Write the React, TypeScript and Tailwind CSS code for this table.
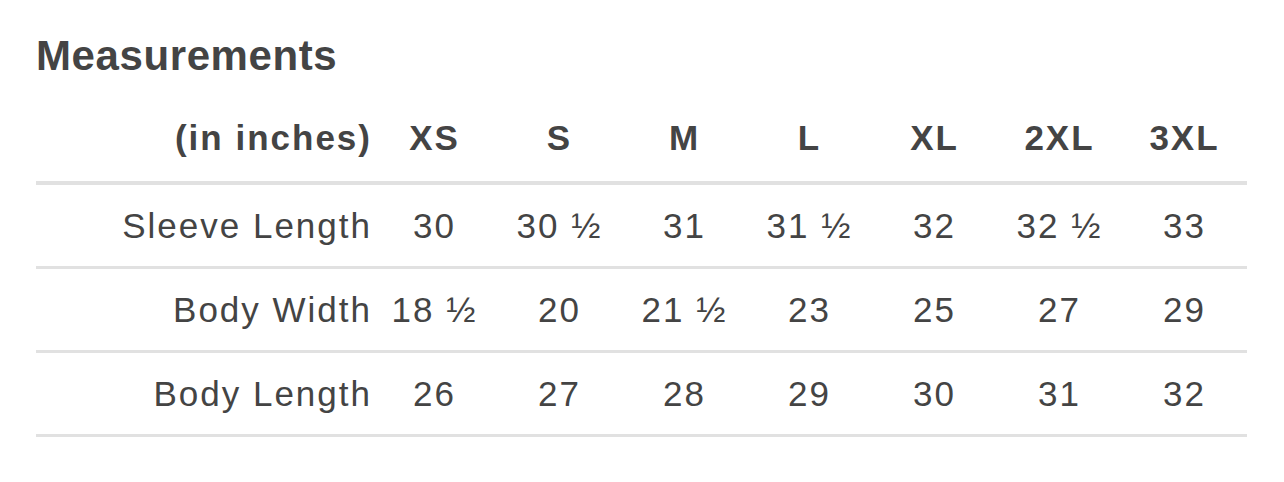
import React from 'react';

const sizes = ['XS', 'S', 'M', 'L', 'XL', '2XL', '3XL'];

const rows = [
  { label: 'Sleeve Length', values: ['30', '30 ½', '31', '31 ½', '32', '32 ½', '33'] },
  { label: 'Body Width', values: ['18 ½', '20', '21 ½', '23', '25', '27', '29'] },
  { label: 'Body Length', values: ['26', '27', '28', '29', '30', '31', '32'] },
];

export default function App() {
  return (
    <div
      className="w-[1284px] h-[482px] bg-white px-[36px] pt-[32px] text-[#444444]"
      style={{ fontFamily: '"Liberation Sans", Arial, sans-serif' }}
    >
      <h2 className="text-[42px] leading-[48px] font-bold tracking-[0.6px] mb-[14px]">Measurements</h2>

      <div className="w-[1211px]">
        <div className="grid grid-cols-[336px_repeat(7,125px)] items-center h-[91px] border-b-[4px] border-[#e1e1e1] text-[35px] leading-[40px] font-bold tracking-[2px]">
          <div className="text-right">(in inches)</div>
          {sizes.map((s) => (
            <div key={s} className="text-center">{s}</div>
          ))}
        </div>

        {rows.map((row) => (
          <div
            key={row.label}
            className="grid grid-cols-[336px_repeat(7,125px)] items-center h-[84px] border-b-[3px] border-[#e1e1e1] text-[35px] leading-[40px] tracking-[2px]"
          >
            <div className="text-right">{row.label}</div>
            {row.values.map((v, i) => (
              <div key={i} className="text-center">{v}</div>
            ))}
          </div>
        ))}
      </div>
    </div>
  );
}
